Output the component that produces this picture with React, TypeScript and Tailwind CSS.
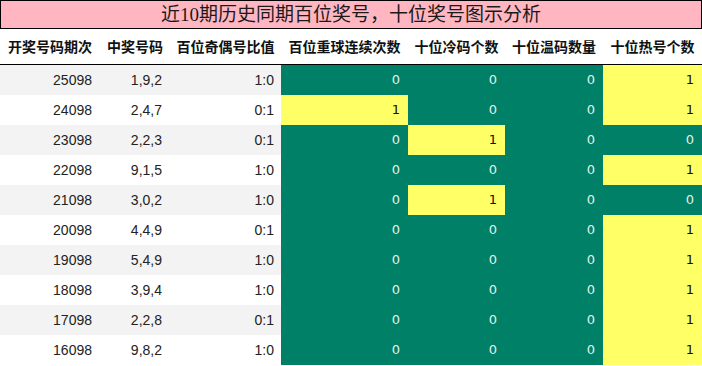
const rows: [string, string, string, number[]][] = [
  ["25098", "1,9,2", "1:0", [0, 0, 0, 1]],
  ["24098", "2,4,7", "0:1", [1, 0, 0, 1]],
  ["23098", "2,2,3", "0:1", [0, 1, 0, 0]],
  ["22098", "9,1,5", "1:0", [0, 0, 0, 1]],
  ["21098", "3,0,2", "1:0", [0, 1, 0, 0]],
  ["20098", "4,4,9", "0:1", [0, 0, 0, 1]],
  ["19098", "5,4,9", "1:0", [0, 0, 0, 1]],
  ["18098", "3,9,4", "1:0", [0, 0, 0, 1]],
  ["17098", "2,2,8", "0:1", [0, 0, 0, 1]],
  ["16098", "9,8,2", "1:0", [0, 0, 0, 1]],
];

const headers = [
  "开奖号码期次",
  "中奖号码",
  "百位奇偶号比值",
  "百位重球连续次数",
  "十位冷码个数",
  "十位温码数量",
  "十位热号个数",
];

const grid = "grid grid-cols-[100px_70px_111px_127px_97px_98px_99px]";

export default function App() {
  return (
    <div className="w-[702px] h-[366px] bg-white overflow-hidden">
      <div className="h-[29px] border border-black bg-[#ffb6c1] flex items-center justify-center text-[19px] text-[#1a1a1a] font-['Liberation_Serif','Noto_Sans_CJK_SC',serif] leading-none">
        近10期历史同期百位奖号，十位奖号图示分析
      </div>
      <div className={`${grid} h-[36px] border-b border-black font-['Noto_Sans_CJK_SC',sans-serif] font-bold text-[14px] text-[#111]`}>
        {headers.map((h) => (
          <div key={h} className="flex items-center justify-center whitespace-nowrap">
            {h}
          </div>
        ))}
      </div>
      {rows.map(([issue, nums, ratio, vals], i) => (
        <div
          key={issue}
          className={`${grid} h-[30px] text-[14px] ${i % 2 === 0 ? "bg-[#f3f3f3]" : "bg-white"}`}
        >
          <div className="flex items-center justify-end pr-[8px] text-[#222] font-['Liberation_Sans',sans-serif]">{issue}</div>
          <div className="flex items-center justify-end pr-[8px] text-[#222] font-['Liberation_Sans',sans-serif]">{nums}</div>
          <div className="flex items-center justify-end pr-[7px] text-[#222] font-['Liberation_Sans',sans-serif]">{ratio}</div>
          {vals.map((v, j) => (
            <div
              key={j}
              className={`flex items-center justify-end pr-[8px] text-[13px] font-['DejaVu_Sans',sans-serif] ${
                v ? "bg-[#ffff66] text-[#111]" : "bg-[#008066] text-[#e2f2ea]"
              }`}
            >
              {v}
            </div>
          ))}
        </div>
      ))}
    </div>
  );
}
